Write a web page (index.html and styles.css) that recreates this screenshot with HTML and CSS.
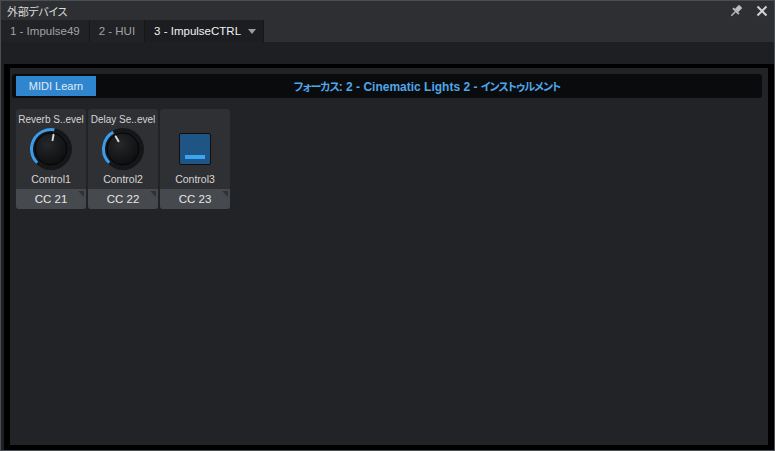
FILE: index.html
```html
<!DOCTYPE html>
<html lang="ja">
<head>
<meta charset="UTF-8" />
<title>外部デバイス</title>
<link rel="stylesheet" href="styles.css">
</head>
<body>

<div class="window">
  <header class="titlebar">
    <span class="title">外部デバイス</span>
    <div class="title-tools">
      <svg class="tool-icon" viewBox="0 0 12 12" width="14" height="14">
        <g transform="rotate(45 6 6)" fill="#bdbdbd">
          <rect x="4" y="0.3" width="4" height="5.2" rx="0.6" />
          <rect x="2.4" y="5.3" width="7.2" height="1.6" rx="0.3" />
          <rect x="5.4" y="6.8" width="1.2" height="4.9" />
        </g>
      </svg>
      <svg class="tool-icon" viewBox="0 0 12 12" width="12" height="12">
        <path d="M1.5 1.5 L10.5 10.5 M10.5 1.5 L1.5 10.5" stroke="#d2d2d2" stroke-width="2" />
      </svg>
    </div>
  </header>

  <nav class="tabs">
    <div class="tab">1 - Impulse49</div>
    <div class="tab">2 - HUI</div>
    <div class="tab active">3 - ImpulseCTRL <span class="caret"></span></div>
  </nav>

  <main class="panel">
    <div class="panel-head">
      <button class="learn-btn">MIDI Learn</button>
      <div class="focus"><span class="jp">フォーカス</span>: 2 - Cinematic Lights 2 - <span class="jp">インストゥルメント</span></div>
    </div>

    <div class="controls">
      <!-- ノブ 1 -->
      <div class="ctl">
        <div class="ctl-cap">Reverb S..evel</div>
        <div class="ctl-body">
          <svg class="knob" viewBox="0 0 44 44" width="44" height="44">
            <defs>
              <radialGradient id="face1" cx="40%" cy="35%" r="70%">
                <stop offset="0" stop-color="#26272a" />
                <stop offset="1" stop-color="#0c0d0e" />
              </radialGradient>
            </defs>
            <circle cx="22" cy="22" r="21" fill="#151618" />
            <path d="M8.21 35.79 A19.5 19.5 0 0 1 25.39 2.80" fill="none" stroke="#3a9ceb" stroke-width="3" />
            <circle cx="22" cy="22" r="16" fill="url(#face1)" stroke="#050506" stroke-width="1" />
            <line x1="23.56" y1="13.14" x2="24.52" y2="7.72" stroke="#d6d6d6" stroke-width="2" stroke-linecap="round" />
          </svg>
        </div>
        <div class="ctl-name">Control1</div>
        <div class="ctl-cc">CC 21</div>
      </div>

      <!-- ノブ 2 -->
      <div class="ctl">
        <div class="ctl-cap">Delay Se..evel</div>
        <div class="ctl-body">
          <svg class="knob" viewBox="0 0 44 44" width="44" height="44">
            <defs>
              <radialGradient id="face2" cx="40%" cy="35%" r="70%">
                <stop offset="0" stop-color="#26272a" />
                <stop offset="1" stop-color="#0c0d0e" />
              </radialGradient>
            </defs>
            <circle cx="22" cy="22" r="21" fill="#151618" />
            <path d="M8.21 35.79 A19.5 19.5 0 0 1 12.25 5.11" fill="none" stroke="#3a9ceb" stroke-width="3" />
            <circle cx="22" cy="22" r="16" fill="url(#face2)" stroke="#050506" stroke-width="1" />
            <line x1="17.5" y1="14.21" x2="14.75" y2="9.44" stroke="#d6d6d6" stroke-width="2" stroke-linecap="round" />
          </svg>
        </div>
        <div class="ctl-name">Control2</div>
        <div class="ctl-cc">CC 22</div>
      </div>

      <!-- ボタン -->
      <div class="ctl">
        <div class="ctl-cap"></div>
        <div class="ctl-body">
          <div class="toggle"><span class="toggle-bar"></span></div>
        </div>
        <div class="ctl-name">Control3</div>
        <div class="ctl-cc">CC 23</div>
      </div>
    </div>
  </main>
</div>

</body>
</html>
```

FILE: styles.css
```css
* {
  box-sizing: border-box;
}
body {
  margin: 0;
  background: #1d1f22;
  font-family: "Liberation Sans", "Noto Sans CJK JP", sans-serif;
}
.window {
  width: 775px;
  height: 451px;
  border: 1px solid #4a4d51;
  background: #1d1f22;
  display: flex;
  flex-direction: column;
}

/* タイトルバー */
.titlebar {
  height: 19px;
  background: #2d2f32;
  display: flex;
  align-items: center;
  justify-content: space-between;
  padding: 0 6px 0 6px;
}
.title {
  color: #dcdcdc;
  font-size: 11px;
  font-family: "Noto Sans CJK JP", sans-serif;
  font-feature-settings: "palt";
  letter-spacing: -0.3px;
}
.title-tools {
  display: flex;
  align-items: center;
  gap: 13px;
}
.tool-icon {
  display: block;
}

/* タブ */
.tabs {
  height: 22px;
  background: #2d2f32;
  display: flex;
}
.tab {
  background: #202225;
  color: #a3a3a3;
  font-size: 11.5px;
  line-height: 22px;
  padding: 0 9px;
  border-right: 1px solid #141618;
  white-space: nowrap;
  display: flex;
  align-items: center;
}
.tab.active {
  background: #1b1d20;
  color: #f2f2f2;
  padding-right: 7px;
}
.caret {
  display: inline-block;
  width: 0;
  height: 0;
  margin-left: 7px;
  border-left: 4px solid transparent;
  border-right: 4px solid transparent;
  border-top: 5px solid #9c9c9c;
}

/* メインパネル */
.panel {
  flex: 1;
  margin: 22px 0 0 3px;
  border-style: solid;
  border-color: #000;
  border-width: 4px 6px 5px 6px;
  background: #222326;
  padding: 6px 6px 0 2px;
}
.panel-head {
  height: 24px;
  background: #0a0b0c;
  border-radius: 3px;
  display: flex;
  align-items: center;
  padding: 0 4px;
}
.learn-btn {
  width: 80px;
  height: 20px;
  background: #2f86cf;
  color: #e2ebf4;
  border: none;
  font-family: inherit;
  font-size: 11px;
  padding: 0;
  cursor: pointer;
}
.focus {
  flex: 1;
  text-align: center;
  color: #4ea6ea;
  font-weight: bold;
  font-size: 12px;
}
.focus .jp {
  font-family: "Noto Sans CJK JP", sans-serif;
  font-feature-settings: "palt";
  font-size: 11px;
  letter-spacing: -1px;
}

/* コントロール */
.controls {
  display: flex;
  gap: 2px;
  margin-top: 11px;
  padding-left: 4px;
}
.ctl {
  width: 70px;
  height: 100px;
  background: #2e3034;
  border-radius: 3px;
  overflow: hidden;
  display: flex;
  flex-direction: column;
  align-items: center;
  padding-top: 4px;
  color: #d6d6d6;
}
.ctl-cap {
  height: 13px;
  font-size: 10px;
  line-height: 13px;
  white-space: nowrap;
}
.ctl-body {
  height: 46px;
  display: flex;
  align-items: center;
  justify-content: center;
}
.knob {
  display: block;
}
.ctl-name {
  height: 14px;
  font-size: 10.5px;
  line-height: 14px;
}
.ctl-cc {
  margin-top: auto;
  width: 100%;
  height: 20px;
  background: #46494d;
  color: #e8e8e8;
  font-size: 11.5px;
  line-height: 20px;
  text-align: center;
  position: relative;
}
.ctl-cc::after {
  content: "";
  position: absolute;
  top: 2px;
  right: 2px;
  border-top: 6px solid #303236;
  border-left: 6px solid transparent;
}
.toggle {
  width: 32px;
  height: 32px;
  background: #1e5585;
  border: 1px solid #0d0e10;
  border-radius: 2px;
  display: flex;
  align-items: flex-end;
  justify-content: center;
  padding-bottom: 5px;
}
.toggle-bar {
  width: 20px;
  height: 4px;
  background: #3aa5f2;
}
```
